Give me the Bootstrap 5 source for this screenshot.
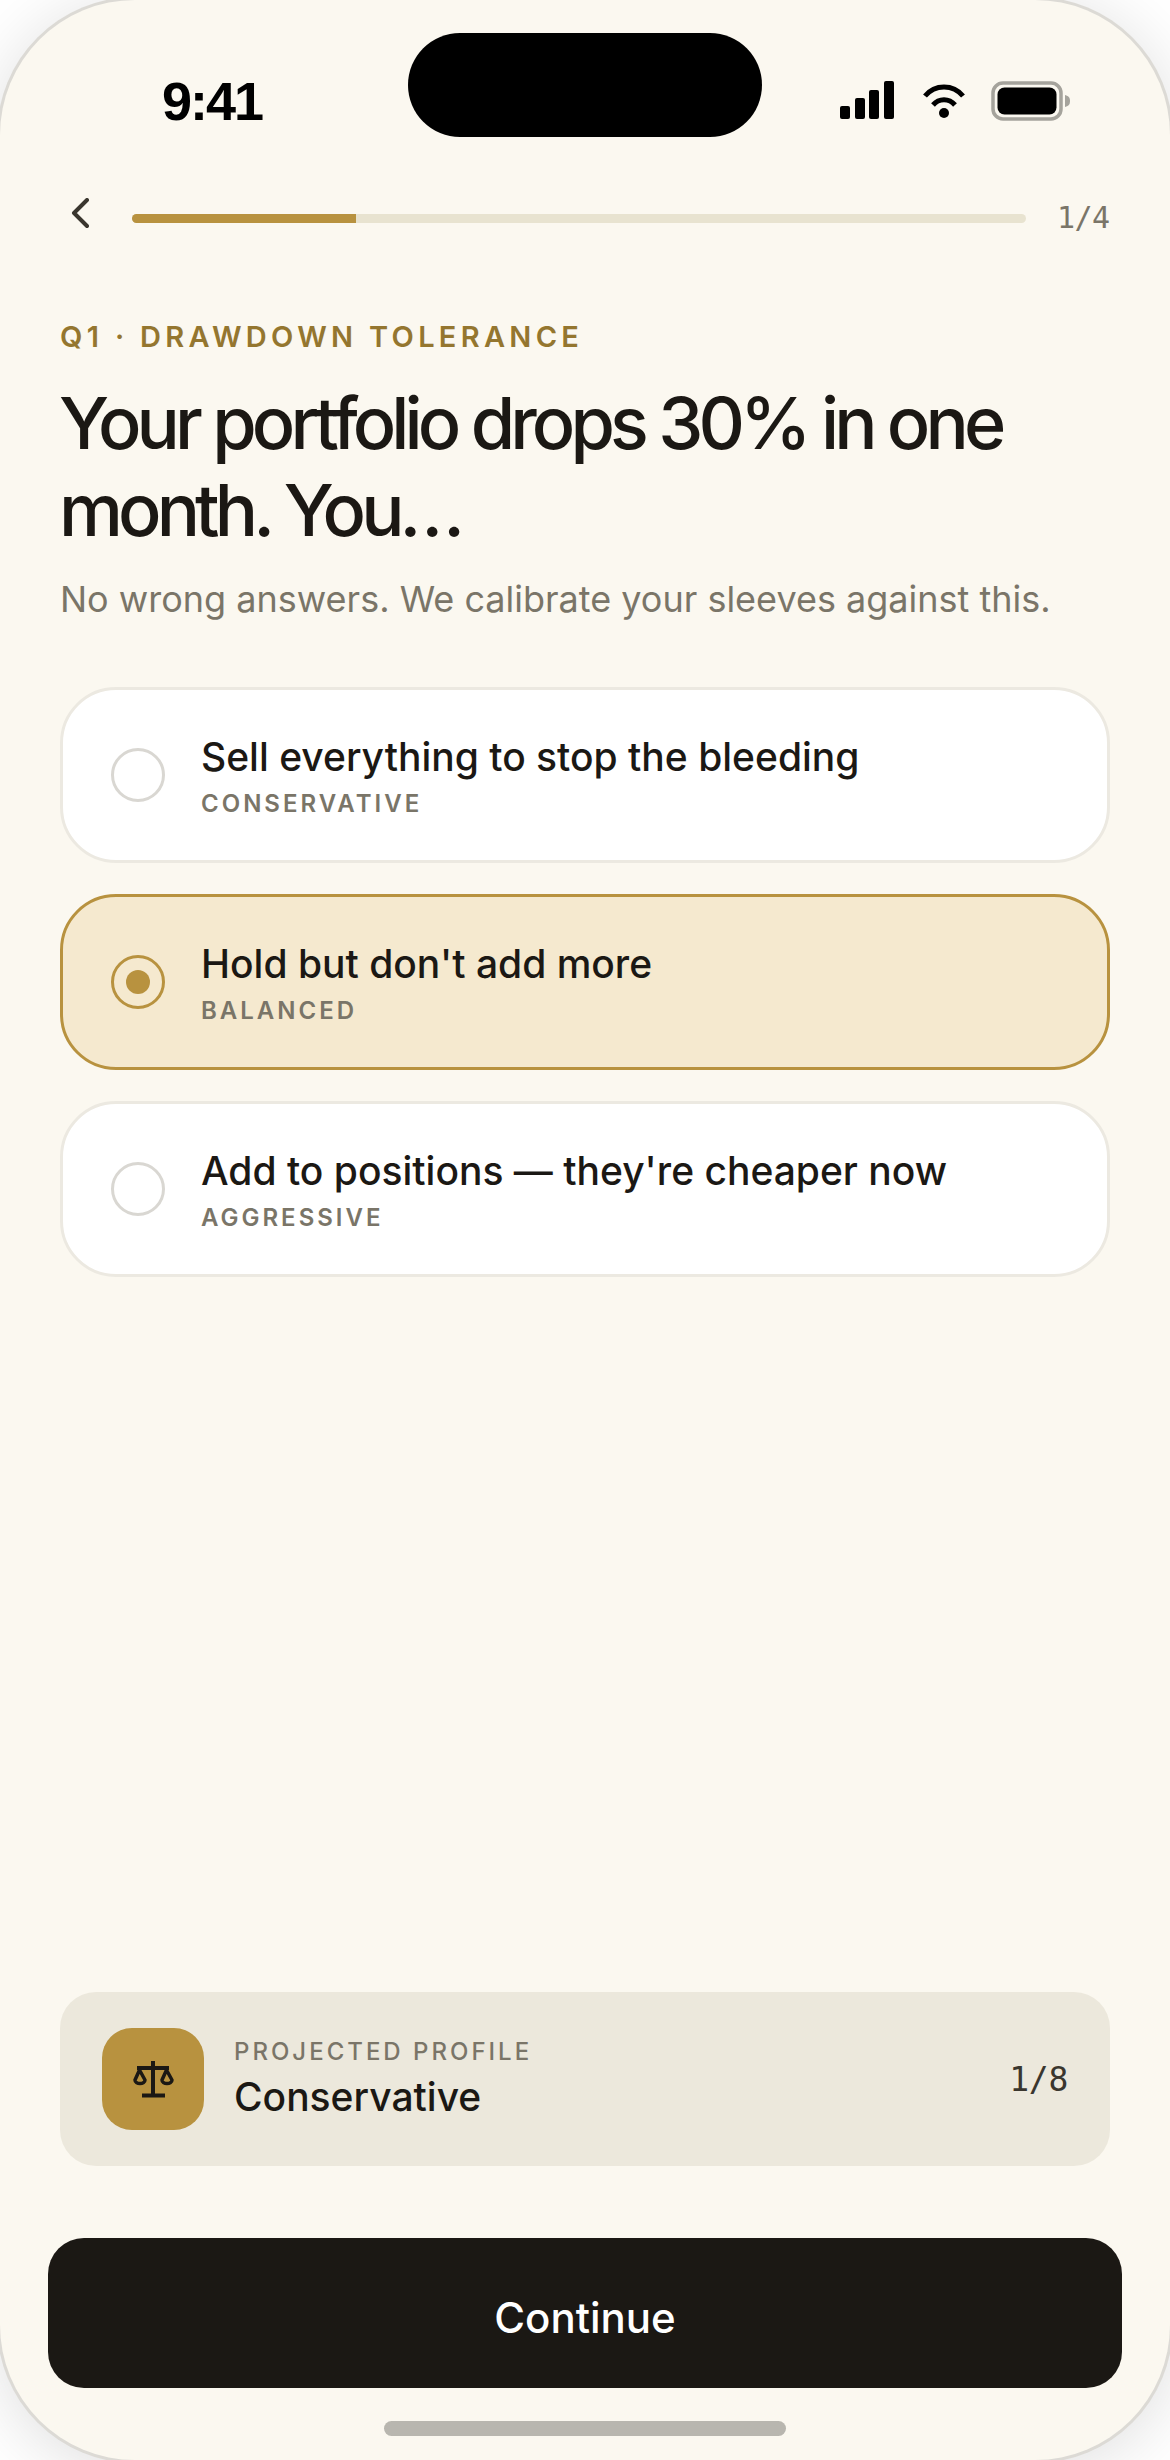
<!DOCTYPE html>
<html lang="en">
<head>
  <meta charset="UTF-8">
  <title>Risk quiz</title>
  <link href="https://cdn.jsdelivr.net/npm/bootstrap@5.3.0/dist/css/bootstrap.min.css" rel="stylesheet">
  <style>
    body { background: #fff; font-family: Inter, "Liberation Sans", sans-serif; color: #1b1814; overflow: hidden; }
    .phone { width: 1170px; height: 2460px; background: #fbf8f0; border-radius: 135px; box-shadow: 0 0 0 3px #dcdad5, 0 8px 70px rgba(0,0,0,.14); overflow: hidden; }
    .status-bar { height: 188px; padding-top: 33px; }
    .clock { width: 408px; padding: 41px 0 0 162px; font: 700 54px/1 "Liberation Sans", sans-serif; letter-spacing: -2px; color: #000; }
    .island { width: 354px; height: 104px; background: #000; border-radius: 52px; }
    .status-icons { padding: 48px 0 0 78px; gap: 29px; }
    .battery { margin-left: -3px; }
    .top-row { padding-left: 68px; height: 60px; }
    .back-btn { width: 64px; flex: none; line-height: 0; }
    .track { width: 894px; flex: none; height: 9px; background: #e8e3d0; border-radius: 5px; overflow: hidden; }
    .track-fill { height: 100%; background: #b8923f; }
    .count { font: 400 30px/1 "DejaVu Sans Mono", monospace; color: #7a7568; margin-left: 31px; white-space: nowrap; letter-spacing: -.6px; }
    .body-area { padding: 0 60px; }
    .eyebrow { margin-top: 72px; font-size: 29px; line-height: 34px; font-weight: 600; letter-spacing: 4.3px; color: #94762f; }
    .headline { margin: 25px 0 0 -1px; font-size: 72px; line-height: 87px; font-weight: 500; letter-spacing: -4.9px; color: #1b1814; }
    .subhead { margin-top: 22px; font-size: 36px; line-height: 48px; color: #7a7568; }
    .answers { margin-top: 64px; gap: 31px; }
    .answer { height: 176px; background: #fff; border: 3px solid #ece9e1; border-radius: 56px; padding: 0 48px; gap: 36px; }
    .answer.picked { background: #f5e9cf; border-color: #b8923f; }
    .radio-dot { width: 54px; height: 54px; flex: none; border: 3px solid #d9d7d2; border-radius: 50%; }
    .answer.picked .radio-dot { border-color: #b8923f; }
    .radio-dot i { display: block; width: 24px; height: 24px; border-radius: 50%; background: #b8923f; }
    .answer-title { font-size: 39px; line-height: 52px; font-weight: 500; color: #1b1814; }
    .answer-tag { font-size: 24px; line-height: 30px; font-weight: 600; letter-spacing: 3px; color: #7a7568; margin-top: 6px; }
    .profile { height: 174px; background: #ece8dc; border-radius: 36px; padding: 0 42px; gap: 30px; }
    .profile-icon { width: 102px; height: 102px; flex: none; background: #b8923f; border-radius: 30px; }
    .profile-label { font-size: 24px; line-height: 30px; font-weight: 500; letter-spacing: 3px; color: #7a7568; }
    .profile-name { font-size: 39px; line-height: 50px; font-weight: 500; color: #1b1814; margin-top: 5px; }
    .profile-count { font: 400 33px/1 "DejaVu Sans Mono", monospace; color: #3a362e; letter-spacing: -.3px; }
    .continue-btn { display: block; width: 1074px; height: 150px; margin: 72px 0 0 48px; padding-top: 9px; background: #1b1814; border: 0; border-radius: 36px; color: #fff; font-size: 42px; font-weight: 500; }
    .home-bar { width: 402px; height: 15px; background: #b8b6af; border-radius: 8px; margin: 33px auto 24px; }
  </style>
</head>
<body class="m-0">
  <div class="phone d-flex flex-column">
    <div class="status-bar d-flex align-items-start">
      <div class="clock">9:41</div>
      <div class="island"></div>
      <div class="status-icons d-flex align-items-start">
        <svg width="54" height="38" viewBox="0 0 54 38"><g fill="#000"><rect x="0" y="25" width="10" height="13" rx="2"/><rect x="15" y="17" width="10" height="21" rx="2"/><rect x="29" y="9" width="10" height="29" rx="2"/><rect x="44" y="0" width="10" height="38" rx="2"/></g></svg>
        <svg width="42" height="38" viewBox="0 0 42 38" fill="none" stroke="#000" stroke-width="5"><path d="M2 15C12 3 30 3 40 15"/><path d="M10 24C16 17 26 17 32 24"/><circle cx="21" cy="32" r="5" fill="#000" stroke="none"/></svg>
        <svg class="battery" width="80" height="40" viewBox="0 0 80 40"><rect x="2" y="2" width="68" height="36" rx="10" fill="none" stroke="#a5a39c" stroke-width="3.5"/><rect x="6.5" y="6.5" width="59" height="27" rx="7" fill="#000"/><path d="M74 14c4 1 5 3 5 6s-1 5-5 6z" fill="#a5a39c"/></svg>
      </div>
    </div>

    <div class="top-row d-flex align-items-center">
      <div class="back-btn">
        <svg width="24" height="40" viewBox="0 0 24 40" fill="none" stroke="#3a362e" stroke-width="4" stroke-linecap="round" stroke-linejoin="round"><path d="M19 2 6 15l13 13"/></svg>
      </div>
      <div class="track"><div class="track-fill w-25"></div></div>
      <div class="count">1/4</div>
    </div>

    <div class="body-area flex-grow-1 d-flex flex-column">
      <div class="eyebrow">Q1 · DRAWDOWN TOLERANCE</div>
      <h1 class="headline">Your portfolio drops 30% in one month. You…</h1>
      <div class="subhead">No wrong answers. We calibrate your sleeves against this.</div>

      <div class="answers d-flex flex-column">
        <div class="answer d-flex align-items-center">
          <div class="radio-dot"></div>
          <div><div class="answer-title">Sell everything to stop the bleeding</div><div class="answer-tag">CONSERVATIVE</div></div>
        </div>
        <div class="answer picked d-flex align-items-center">
          <div class="radio-dot d-flex align-items-center justify-content-center"><i></i></div>
          <div><div class="answer-title">Hold but don't add more</div><div class="answer-tag">BALANCED</div></div>
        </div>
        <div class="answer d-flex align-items-center">
          <div class="radio-dot"></div>
          <div><div class="answer-title">Add to positions — they're cheaper now</div><div class="answer-tag">AGGRESSIVE</div></div>
        </div>
      </div>

      <div class="profile d-flex align-items-center mt-auto">
        <div class="profile-icon d-flex align-items-center justify-content-center">
          <svg width="48" height="48" viewBox="0 0 48 48" fill="none" stroke="#1b1814" stroke-width="3.5" stroke-linejoin="round"><path d="M24 6V41M13 40.5H36M8 13H40" stroke-width="4"/><path d="M10.500 15 6 25a5 3.500 0 0 0 10 0zM37.500 15 33 25a5 3.500 0 0 0 10 0z"/></svg>
        </div>
        <div class="flex-grow-1">
          <div class="profile-label">PROJECTED PROFILE</div>
          <div class="profile-name">Conservative</div>
        </div>
        <div class="profile-count">1/8</div>
      </div>
    </div>

    <button class="continue-btn" type="button">Continue</button>
    <div class="home-bar"></div>
  </div>
  <script src="https://cdn.jsdelivr.net/npm/bootstrap@5.3.0/dist/js/bootstrap.bundle.min.js"></script>
</body>
</html>
